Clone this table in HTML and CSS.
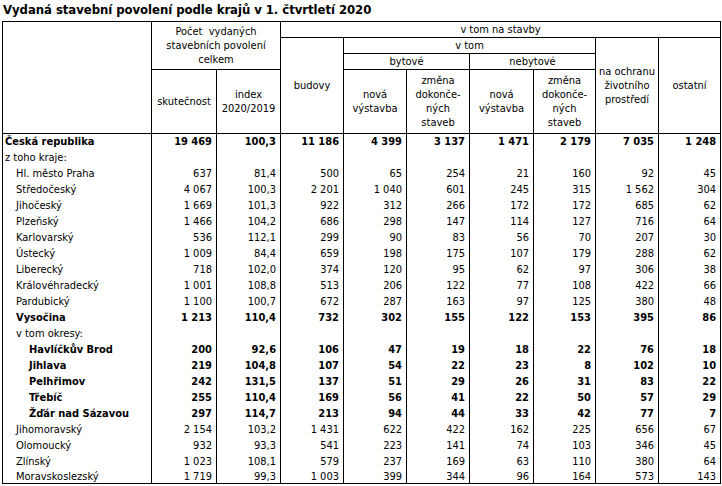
FILE: index.html
```html
<!DOCTYPE html>
<html lang="cs">
<head>
<meta charset="utf-8">
<title>Vydaná stavební povolení podle krajů v 1. čtvrtletí 2020</title>
<link rel="stylesheet" href="styles.css">
</head>
<body>
<h1 class="title">Vydaná stavební povolení podle krajů v 1. čtvrtletí 2020</h1>
<table class="grid">
<colgroup>
<col class="c-name"><col class="c-65"><col class="c-64"><col class="c-63"><col class="c-63"><col class="c-63"><col class="c-64"><col class="c-62"><col class="c-63"><col class="c-62">
</colgroup>
<thead>
<tr class="h1">
<th rowspan="4"></th>
<th colspan="2" rowspan="3">Počet&nbsp; vydaných<br>stavebních povolení<br>celkem</th>
<th colspan="7">v tom na stavby</th>
</tr>
<tr class="h2">
<th rowspan="3">budovy</th>
<th colspan="4">v tom</th>
<th rowspan="3">na ochranu<br>životního<br>prostředí</th>
<th rowspan="3">ostatní</th>
</tr>
<tr class="h3">
<th colspan="2">bytové</th>
<th colspan="2">nebytové</th>
</tr>
<tr class="h4">
<th>skutečnost</th>
<th>index<br>2020/2019</th>
<th>nová<br>výstavba</th>
<th>změna<br>dokonče-<br>ných<br>staveb</th>
<th>nová<br>výstavba</th>
<th>změna<br>dokonče-<br>ných<br>staveb</th>
</tr>
</thead>
<tbody>
<tr class="bold"><td class="l0">Česká republika</td><td>19 469</td><td>100,3</td><td>11 186</td><td>4 399</td><td>3 137</td><td>1 471</td><td>2 179</td><td>7 035</td><td>1 248</td></tr>
<tr><td class="l0">z toho kraje:</td><td></td><td></td><td></td><td></td><td></td><td></td><td></td><td></td><td></td></tr>
<tr><td class="l1">Hl. město Praha</td><td>637</td><td>81,4</td><td>500</td><td>65</td><td>254</td><td>21</td><td>160</td><td>92</td><td>45</td></tr>
<tr><td class="l1">Středočeský</td><td>4 067</td><td>100,3</td><td>2 201</td><td>1 040</td><td>601</td><td>245</td><td>315</td><td>1 562</td><td>304</td></tr>
<tr><td class="l1">Jihočeský</td><td>1 669</td><td>101,3</td><td>922</td><td>312</td><td>266</td><td>172</td><td>172</td><td>685</td><td>62</td></tr>
<tr><td class="l1">Plzeňský</td><td>1 466</td><td>104,2</td><td>686</td><td>298</td><td>147</td><td>114</td><td>127</td><td>716</td><td>64</td></tr>
<tr><td class="l1">Karlovarský</td><td>536</td><td>112,1</td><td>299</td><td>90</td><td>83</td><td>56</td><td>70</td><td>207</td><td>30</td></tr>
<tr><td class="l1">Ústecký</td><td>1 009</td><td>84,4</td><td>659</td><td>198</td><td>175</td><td>107</td><td>179</td><td>288</td><td>62</td></tr>
<tr><td class="l1">Liberecký</td><td>718</td><td>102,0</td><td>374</td><td>120</td><td>95</td><td>62</td><td>97</td><td>306</td><td>38</td></tr>
<tr><td class="l1">Královéhradecký</td><td>1 001</td><td>108,8</td><td>513</td><td>206</td><td>122</td><td>77</td><td>108</td><td>422</td><td>66</td></tr>
<tr><td class="l1">Pardubický</td><td>1 100</td><td>100,7</td><td>672</td><td>287</td><td>163</td><td>97</td><td>125</td><td>380</td><td>48</td></tr>
<tr class="bold"><td class="l1">Vysočina</td><td>1 213</td><td>110,4</td><td>732</td><td>302</td><td>155</td><td>122</td><td>153</td><td>395</td><td>86</td></tr>
<tr><td class="l1">v tom okresy:</td><td></td><td></td><td></td><td></td><td></td><td></td><td></td><td></td><td></td></tr>
<tr class="bold"><td class="l2">Havlíčkův Brod</td><td>200</td><td>92,6</td><td>106</td><td>47</td><td>19</td><td>18</td><td>22</td><td>76</td><td>18</td></tr>
<tr class="bold"><td class="l2">Jihlava</td><td>219</td><td>104,8</td><td>107</td><td>54</td><td>22</td><td>23</td><td>8</td><td>102</td><td>10</td></tr>
<tr class="bold"><td class="l2">Pelhřimov</td><td>242</td><td>131,5</td><td>137</td><td>51</td><td>29</td><td>26</td><td>31</td><td>83</td><td>22</td></tr>
<tr class="bold"><td class="l2">Třebíč</td><td>255</td><td>110,4</td><td>169</td><td>56</td><td>41</td><td>22</td><td>50</td><td>57</td><td>29</td></tr>
<tr class="bold"><td class="l2">Žďár nad Sázavou</td><td>297</td><td>114,7</td><td>213</td><td>94</td><td>44</td><td>33</td><td>42</td><td>77</td><td>7</td></tr>
<tr><td class="l1">Jihomoravský</td><td>2 154</td><td>103,2</td><td>1 431</td><td>622</td><td>422</td><td>162</td><td>225</td><td>656</td><td>67</td></tr>
<tr><td class="l1">Olomoucký</td><td>932</td><td>93,3</td><td>541</td><td>223</td><td>141</td><td>74</td><td>103</td><td>346</td><td>45</td></tr>
<tr><td class="l1">Zlínský</td><td>1 023</td><td>108,1</td><td>579</td><td>237</td><td>169</td><td>63</td><td>110</td><td>380</td><td>64</td></tr>
<tr class="last"><td class="l1">Moravskoslezský</td><td>1 719</td><td>99,3</td><td>1 003</td><td>399</td><td>344</td><td>96</td><td>164</td><td>573</td><td>143</td></tr>
</tbody>
</table>
</body>
</html>
```
FILE: styles.css
```css
html, body {
  margin: 0;
  padding: 0;
  background: #ffffff;
  color: #000000;
}
body {
  font-family: "DejaVu Sans Condensed", "DejaVu Sans", "Liberation Sans", sans-serif;
  font-stretch: condensed;
  font-size: 11px;
}
.title {
  margin: 0;
  padding: 2px 0 0 3px;
  height: 19px;
  box-sizing: border-box;
  font-size: 13px;
  line-height: 16px;
  font-weight: bold;
  letter-spacing: -0.05px;
  white-space: nowrap;
}
.grid {
  margin: 2px 0 0 2px;
  border-collapse: collapse;
  table-layout: fixed;
  width: 719px;
  border: 1px solid #000;
}
.c-name { width: 149px; }
.c-65 { width: 65px; }
.c-64 { width: 64px; }
.c-63 { width: 63px; }
.c-62 { width: 62px; }
.grid th {
  border: 1px solid #000;
  font-weight: normal;
  text-align: center;
  vertical-align: middle;
  line-height: 14px;
  padding: 0;
  white-space: nowrap;
}
.h1, .h2, .h3 { height: 16px; }
.h4 { height: 64px; }
.grid td {
  border-left: 1px solid #000;
  border-right: 1px solid #000;
  text-align: right;
  padding: 0 4px 0 0;
  height: 16px;
  line-height: 16px;
  white-space: nowrap;
}
.grid td.l0 { text-align: left; padding-left: 2px; }
.grid td.l1 { text-align: left; padding-left: 13px; }
.grid td.l2 { text-align: left; padding-left: 26px; }
.bold td { font-weight: bold; }
.last td { height: 13px; line-height: 13px; }
```
